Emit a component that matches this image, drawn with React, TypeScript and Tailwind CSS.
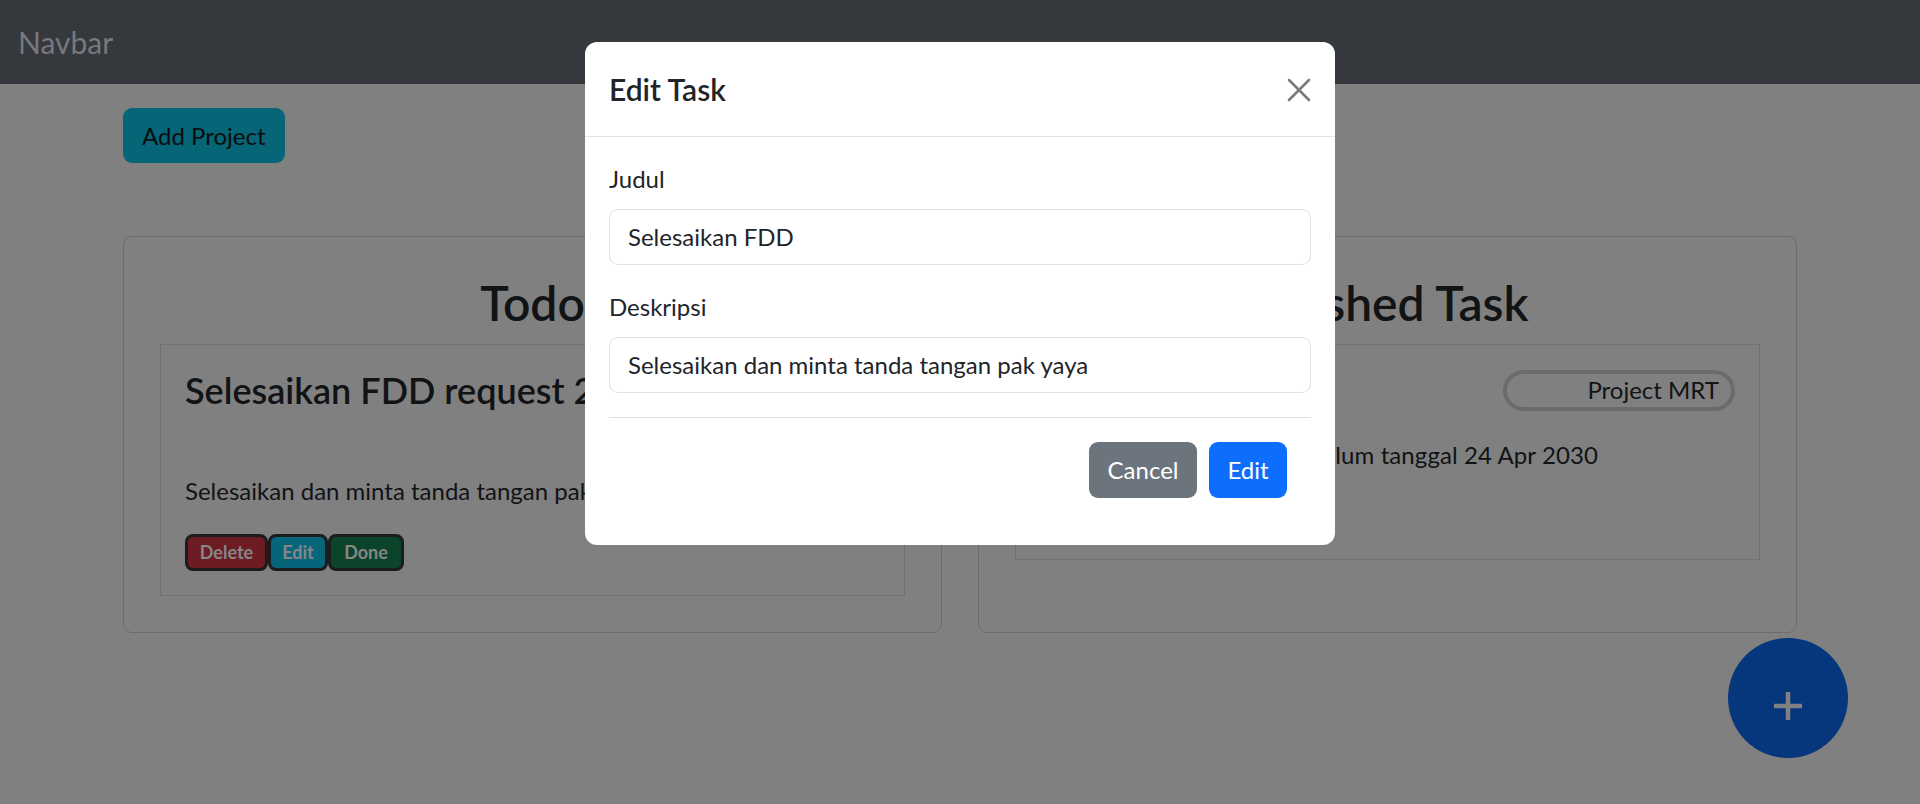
import React from 'react';

const font = { fontFamily: 'Lato, "Noto Sans", sans-serif' };

function TaskButtons() {
  return (
    <div className="mt-[25px] flex">
      <button className="flex h-[37px] w-[83px] items-center justify-center rounded-[8px] border-[3px] border-[#1c1c1c] bg-[#6e1c24] text-[18px] font-bold text-[#868686]">
        Delete
      </button>
      <button className="flex h-[37px] w-[60px] items-center justify-center rounded-[8px] border-[3px] border-[#1c1c1c] bg-[#06657a] text-[18px] font-bold text-[#868686]">
        Edit
      </button>
      <button className="flex h-[37px] w-[76px] items-center justify-center rounded-[8px] border-[3px] border-[#1c1c1c] bg-[#0c442b] text-[18px] font-bold text-[#868686]">
        Done
      </button>
    </div>
  );
}

function EditModal() {
  return (
    <div className="absolute left-[585px] top-[42px] w-[750px] rounded-[12px] bg-white text-[#212529]">
      <div className="flex h-[95px] items-center justify-between border-b border-[#dee2e6] px-[24px]">
        <h5 className="text-[30px] font-semibold leading-[45px]">Edit Task</h5>
        <svg width="24" height="24" viewBox="0 0 24 24" className="mt-[1px]">
          <path d="M2 2 L22 22 M22 2 L2 22" stroke="#7b7b7b" strokeWidth="2.6" strokeLinecap="round" />
        </svg>
      </div>
      <div className="p-[24px]">
        <label className="mb-[12px] block text-[24px] leading-[36px]">Judul</label>
        <div className="flex h-[56px] items-center rounded-[9px] border border-[#dee2e6] px-[18px] text-[24px]">
          Selesaikan FDD
        </div>
        <label className="mb-[12px] mt-[24px] block text-[24px] leading-[36px]">Deskripsi</label>
        <div className="flex h-[56px] items-center rounded-[9px] border border-[#dee2e6] px-[18px] text-[24px]">
          Selesaikan dan minta tanda tangan pak yaya
        </div>
        <div className="mt-[24px] flex justify-end gap-[12px] border-t border-[#dee2e6] px-[24px] pb-[23px] pt-[24px]">
          <button className="h-[56px] w-[108px] rounded-[9px] bg-[#6c757d] text-[24px] text-white">Cancel</button>
          <button className="h-[56px] w-[78px] rounded-[9px] bg-[#0d6efd] text-[24px] text-white">Edit</button>
        </div>
      </div>
    </div>
  );
}

export default function App() {
  return (
    <div className="relative h-[804px] w-full overflow-hidden bg-[#808080] text-[#111315]" style={font}>
      <nav className="flex h-[84px] items-center bg-[#35383d] px-[18px]">
        <span className="text-[30px] leading-[45px] text-[#77797d]">Navbar</span>
      </nav>

      <div className="mx-auto w-[1710px] px-[18px]">
        <button className="mt-[24px] h-[55px] rounded-[9px] bg-[#066576] px-[19px] text-[24px] text-[#0b0d0e]">
          Add Project
        </button>

        <div className="mt-[73px] grid grid-cols-2 gap-[36px]">
          <div className="rounded-[9px] border border-[#6c6c6c] px-[36px] pb-[24px] pt-[37px]">
            <h2 className="mb-[12px] text-center text-[48px] font-semibold leading-[57.6px]">Todo</h2>
            <div className="mb-[12px] border border-[#727272] p-[24px]">
              <h4 className="text-[36px] font-semibold leading-[43.2px]">Selesaikan FDD request 2</h4>
              <p className="mt-[61px] text-[24px] leading-[36px]">Selesaikan dan minta tanda tangan pak yaya</p>
              <TaskButtons />
            </div>
          </div>

          <div className="rounded-[9px] border border-[#6c6c6c] px-[36px] pb-[24px] pt-[37px]">
            <h2 className="mb-[12px] text-center text-[48px] font-semibold leading-[57.6px]">Finished Task</h2>
            <div className="border border-[#727272] p-[24px]">
              <div className="flex h-[43px] items-start justify-between">
                <h4 className="text-[36px] font-semibold leading-[43.2px]">Selesaikan FDD</h4>
                <span className="mt-[1px] flex h-[41px] w-[232px] items-center justify-end rounded-full border-[4px] border-[#6b6b6b] pr-[12px] text-[24px]">
                  Project MRT
                </span>
              </div>
              <p className="mr-[137px] mt-[25px] text-right text-[24px] leading-[36px] tracking-[0.1px]">
                Harus selesai sebelum tanggal 24 Apr 2030
              </p>
              <div className="h-[62px]" />
            </div>
          </div>
        </div>
      </div>

      <EditModal />

      <button className="absolute left-[1728px] top-[638px] flex h-[120px] w-[120px] items-center justify-center rounded-full bg-[#06367c]">
        <svg width="120" height="120" viewBox="0 0 120 120">
          <path d="M46 68 H74 M60 54 V82" stroke="#808080" strokeWidth="4.5" />
        </svg>
      </button>
    </div>
  );
}
